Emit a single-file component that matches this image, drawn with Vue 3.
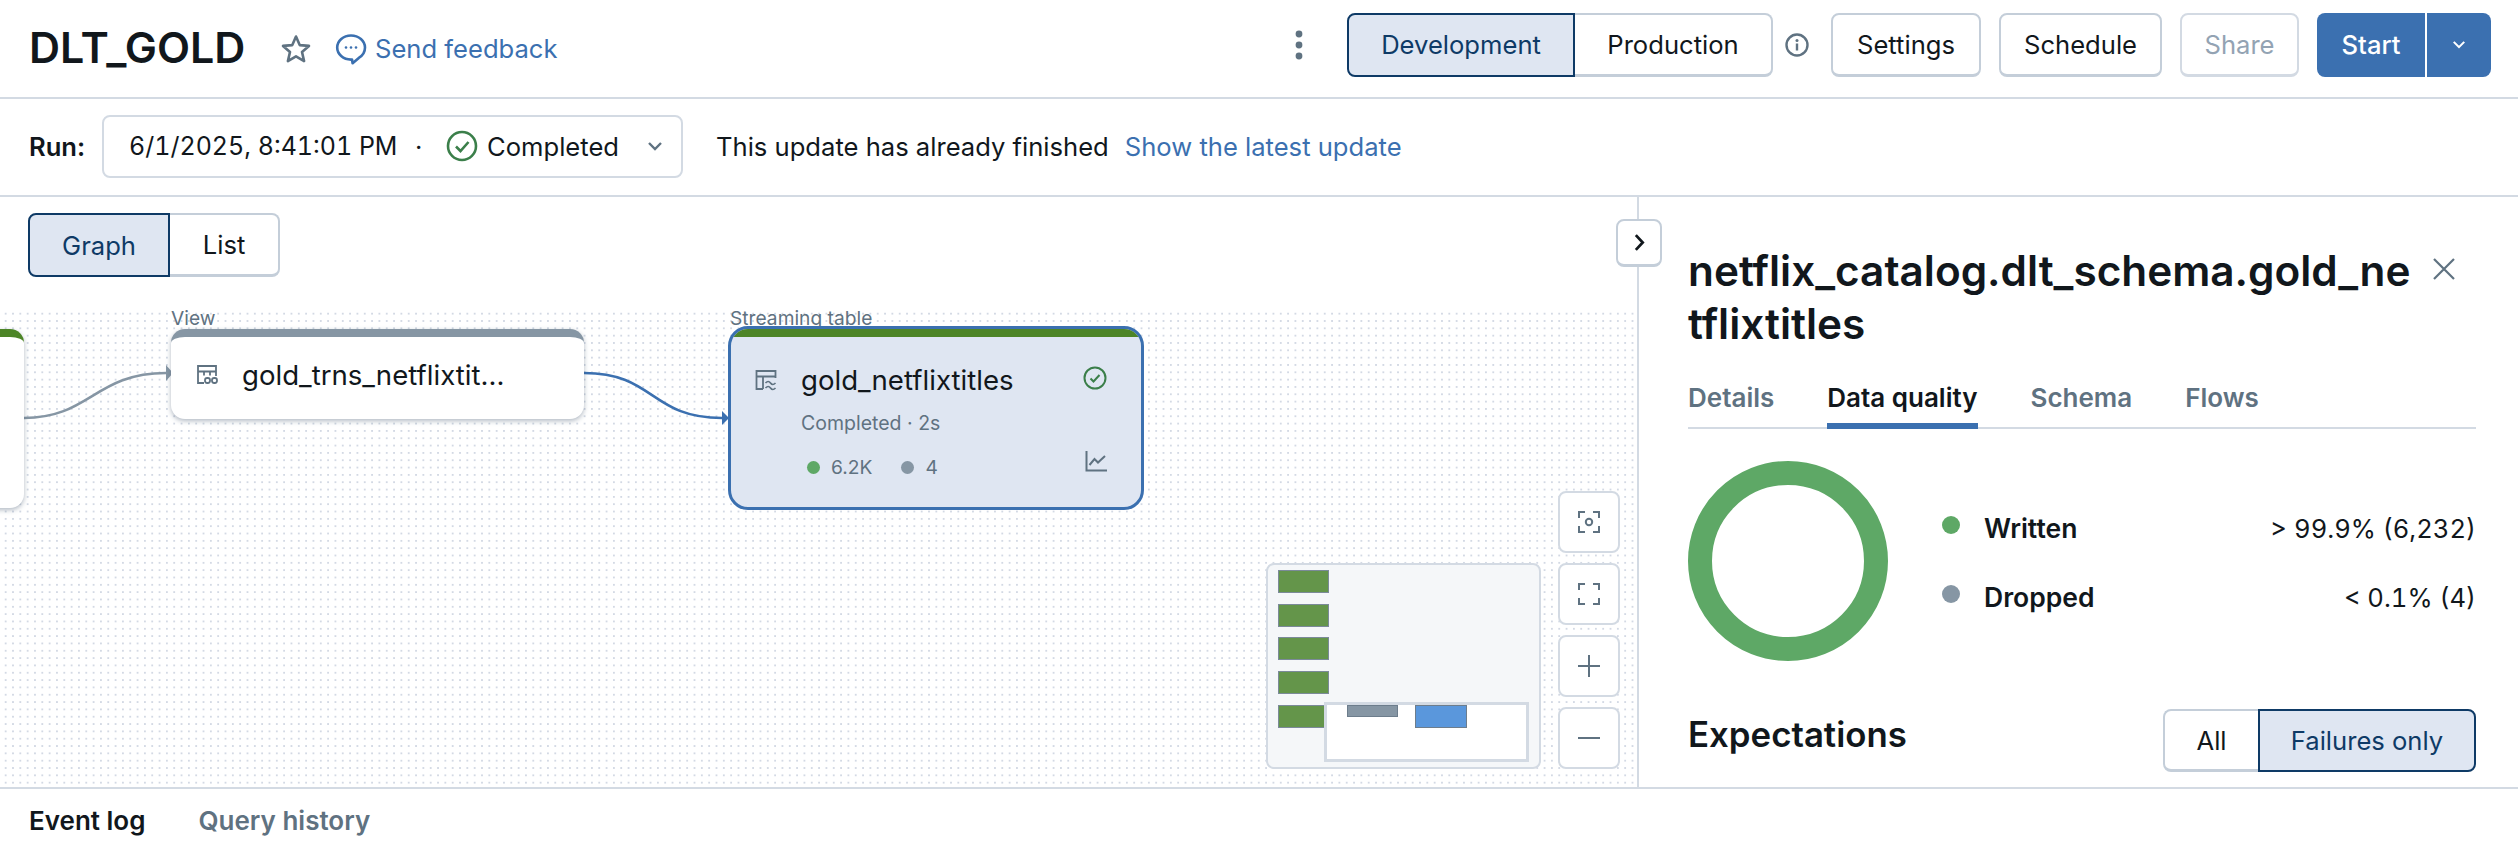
<template>
  <div class="page">
    <header class="topbar">
      <h1 class="title">DLT_GOLD</h1>
      <svg class="star" viewBox="0 0 32 32" fill="none" aria-hidden="true">
        <path d="M16 3.5l3.7 8.6 9.3.8-7 6.1 2.1 9.1-8.1-4.8-8.1 4.8 2.1-9.1-7-6.1 9.3-.8z" stroke="#5f7281" stroke-width="2.6" stroke-linejoin="round" />
      </svg>
      <a class="feedback">
        <svg class="feedback-icon" viewBox="0 0 32 32" fill="none" aria-hidden="true">
          <path d="M16 2.5C8.3 2.5 2.2 7.900 2.200 14.600c0 6.600 6 12 13.800 12 .4 0 .7 0 1-.1l.6 3.800 6.200-5.400c3.900-2.200 6.200-6 6.200-10.300 0-6.700-6.200-12.100-14-12.100z" stroke="#3b70b0" stroke-width="2.600" stroke-linejoin="round" />
          <circle cx="11" cy="14.500" r="1.300" fill="#3b70b0" />
          <circle cx="16" cy="14.500" r="1.300" fill="#3b70b0" />
          <circle cx="21" cy="14.500" r="1.300" fill="#3b70b0" />
        </svg>
        Send feedback
      </a>
      <div class="top-actions">
        <svg class="kebab" viewBox="0 0 8 30" aria-hidden="true">
          <circle cx="4" cy="4" r="3.400" fill="#5f7281" />
          <circle cx="4" cy="15" r="3.400" fill="#5f7281" />
          <circle cx="4" cy="26" r="3.400" fill="#5f7281" />
        </svg>
        <div class="seg seg-mode">
          <button class="seg-btn active dev">Development</button>
          <button class="seg-btn prod">Production</button>
        </div>
        <svg class="info" viewBox="0 0 24 24" fill="none" aria-hidden="true">
          <circle cx="12" cy="12" r="10.500" stroke="#5f7281" stroke-width="2.400" />
          <circle cx="12" cy="7.500" r="1.500" fill="#5f7281" />
          <rect x="10.800" y="10.500" width="2.400" height="7" fill="#5f7281" />
        </svg>
        <button class="btn settings">Settings</button>
        <button class="btn schedule">Schedule</button>
        <button class="btn share" disabled>Share</button>
        <div class="start">
          <span class="start-label">Start</span>
          <span class="start-caret">
            <svg viewBox="0 0 16 10" width="14" height="9" fill="none" aria-hidden="true">
              <path d="M2 2l6 6 6-6" stroke="#fff" stroke-width="2.400" />
            </svg>
          </span>
        </div>
      </div>
    </header>

    <div class="runbar">
      <span class="run-label">Run:</span>
      <div class="run-select">
        <span class="run-date">6/1/2025, 8:41:01 PM</span>
        <span class="run-dot">·</span>
        <svg class="run-check" viewBox="0 0 32 32" fill="none" aria-hidden="true">
          <circle cx="16" cy="16" r="14" stroke="#3b7f4a" stroke-width="2.600" />
          <path d="M10 16.500l4.500 4.500 8-9" stroke="#3b7f4a" stroke-width="2.600" />
        </svg>
        <span class="run-status">Completed</span>
        <svg class="run-caret" viewBox="0 0 16 10" fill="none" aria-hidden="true">
          <path d="M2 2l6 6 6-6" stroke="#5f7281" stroke-width="2.400" />
        </svg>
      </div>
      <span class="run-msg">This update has already finished</span>
      <a class="run-link">Show the latest update</a>
    </div>

    <main class="main">
      <section class="left">
        <div class="graph-tools">
          <div class="seg seg-view">
            <button class="seg-btn active graph-btn">Graph</button>
            <button class="seg-btn list-btn">List</button>
          </div>
        </div>

        <div class="canvas">
          <svg class="edges" width="1637" height="478" fill="none" aria-hidden="true">
            <path d="M24 110C90 110 95 65 166 65" stroke="#8696a4" stroke-width="2.500" />
            <path d="M166 57l7 8-7 8z" fill="#8696a4" />
            <path d="M584 65C655 65 650 110 722 110" stroke="#3b70b0" stroke-width="2.500" />
            <path d="M722 103l7 7-7 7z" fill="#3b70b0" />
          </svg>

          <div class="node node-left"></div>

          <span class="node-type type-view">View</span>
          <div class="node node-view">
            <svg class="node-icon" viewBox="0 0 22 22" fill="none" aria-hidden="true">
              <path d="M8 19H2V2h18v10M2 7.500h18M8 7.500v4M14 7.500v4" stroke="#5f7281" stroke-width="1.800" />
              <rect x="9" y="14" width="5" height="5" rx="2.200" stroke="#5f7281" stroke-width="1.800" />
              <rect x="16" y="14" width="5" height="5" rx="2.200" stroke="#5f7281" stroke-width="1.800" />
            </svg>
            <span class="node-name">gold_trns_netflixtit...</span>
          </div>

          <span class="node-type type-stream">Streaming table</span>
          <div class="node node-stream">
            <div class="stream-head">
              <svg class="node-icon" viewBox="0 0 22 22" fill="none" aria-hidden="true">
                <path d="M8 20H1.500V2h19v7M1.500 7.500h19M8 7.500V20" stroke="#5f7281" stroke-width="1.800" />
                <path d="M10.500 14c2-2 3.500-2 5 0s3 2 5 0M10.500 19c2-2 3.500-2 5 0s3 2 5 0" stroke="#5f7281" stroke-width="1.700" />
              </svg>
              <span class="node-name">gold_netflixtitles</span>
              <svg class="stream-check" viewBox="0 0 24 24" fill="none" aria-hidden="true">
                <circle cx="12" cy="12" r="10.500" stroke="#3b7f4a" stroke-width="2" />
                <path d="M7.500 12.500l3 3 6-6.500" stroke="#3b7f4a" stroke-width="2" />
              </svg>
            </div>
            <div class="stream-sub">Completed · 2s</div>
            <div class="stream-stats">
              <i class="dot green"></i><span class="stat-a">6.2K</span>
              <i class="dot grey"></i><span>4</span>
              <svg class="stream-chart" viewBox="0 0 22 22" fill="none" aria-hidden="true">
                <path d="M1.500 1v19.500H22" stroke="#5f7281" stroke-width="2" />
                <path d="M4.500 15l5-6 3.500 3.500L20 6" stroke="#5f7281" stroke-width="2" />
              </svg>
            </div>
          </div>

          <div class="minimap">
            <i v-for="top in miniBars" :key="top" class="mini-bar" :style="{ top: top + 'px' }"></i>
            <div class="mini-view"></div>
            <i class="mini-grey"></i>
            <i class="mini-blue"></i>
          </div>

          <div class="controls">
            <button class="ctl">
              <svg viewBox="0 0 22 22" fill="none" aria-hidden="true">
                <path d="M1 7V1h6M15 1h6v6M21 15v6h-6M7 21H1v-6" stroke="#5f7281" stroke-width="2" />
                <circle cx="11" cy="11" r="3.200" stroke="#5f7281" stroke-width="2" />
              </svg>
            </button>
            <button class="ctl">
              <svg viewBox="0 0 22 22" fill="none" aria-hidden="true">
                <path d="M1 7V1h6M15 1h6v6M21 15v6h-6M7 21H1v-6" stroke="#5f7281" stroke-width="2" />
              </svg>
            </button>
            <button class="ctl">
              <svg viewBox="0 0 22 22" fill="none" aria-hidden="true">
                <path d="M0 11h22M11 0v22" stroke="#5f7281" stroke-width="2" />
              </svg>
            </button>
            <button class="ctl">
              <svg viewBox="0 0 22 22" fill="none" aria-hidden="true">
                <path d="M0 11h22" stroke="#5f7281" stroke-width="2" />
              </svg>
            </button>
          </div>
        </div>

        <button class="collapse">
          <svg viewBox="0 0 12 20" width="11" height="19" fill="none" aria-hidden="true">
            <path d="M2 2l7.500 8L2 18" stroke="#11171c" stroke-width="3" />
          </svg>
        </button>
      </section>

      <aside class="panel">
        <div class="panel-head">
          <h2 class="panel-title">netflix_catalog.dlt_schema.gold_netflixtitles</h2>
          <svg class="close" viewBox="0 0 24 24" fill="none" aria-hidden="true">
            <path d="M2 2l20 20M22 2L2 22" stroke="#5f7281" stroke-width="2.200" />
          </svg>
        </div>

        <nav class="tabs">
          <span v-for="tab in tabs" :key="tab" class="tab" :class="{ on: tab === 'Data quality' }">{{ tab }}</span>
        </nav>

        <div class="quality">
          <div class="donut"></div>
          <div class="legend">
            <div class="legend-row">
              <i class="legend-dot green"></i>
              <span class="legend-name">Written</span>
              <span class="legend-val">&gt; 99.9% (6,232)</span>
            </div>
            <div class="legend-row">
              <i class="legend-dot grey"></i>
              <span class="legend-name">Dropped</span>
              <span class="legend-val">&lt; 0.1% (4)</span>
            </div>
          </div>
        </div>

        <div class="expect">
          <h3 class="expect-title">Expectations</h3>
          <div class="seg seg-expect">
            <button class="seg-btn all-btn">All</button>
            <button class="seg-btn active fail-btn">Failures only</button>
          </div>
        </div>
      </aside>
    </main>

    <footer class="bottom">
      <span class="bottom-tab on">Event log</span>
      <span class="bottom-tab">Query history</span>
    </footer>
  </div>
</template>

<script setup>
const tabs = ['Details', 'Data quality', 'Schema', 'Flows']
const miniBars = [5, 39, 72, 106, 140]
</script>

<style>
html, body { margin: 0; background: #fff; }
</style>

<style scoped>
.page {
  width: 2518px;
  height: 842px;
  display: flex;
  flex-direction: column;
  overflow: hidden;
  font-family: Inter, "Liberation Sans", sans-serif;
  color: #11171c;
  font-size: 25.6px;
  background: #fff;
}

button {
  font-family: inherit;
  font-size: 25.6px;
  color: #11171c;
  background: #fff;
  padding: 0;
  cursor: pointer;
}

/* top bar */
.topbar {
  height: 99px;
  flex-shrink: 0;
  box-sizing: border-box;
  border-bottom: 2px solid #d3dae3;
  display: flex;
  align-items: center;
  padding: 0 27px 0 29px;
}
.title {
  margin: 0;
  font-size: 43px;
  font-weight: 600;
  width: 217px;
  position: relative;
  top: -2px;
  white-space: nowrap;
}
.star { width: 32px; height: 32px; margin-left: 34px; }
.feedback {
  display: flex;
  align-items: center;
  gap: 8px;
  margin-left: 23px;
  color: #3b70b0;
  white-space: nowrap;
}
.feedback-icon { width: 32px; height: 32px; }

.top-actions { margin-left: auto; margin-bottom: 8px; display: flex; align-items: center; }
.kebab { width: 8px; height: 30px; margin-right: 44px; }
.info { width: 24px; height: 24px; margin: 0 22px 0 12px; }

.seg { display: flex; height: 64px; }
.seg-btn {
  box-sizing: border-box;
  height: 100%;
  border: 2px solid #c4ced9;
  border-bottom-width: 3px;
  white-space: nowrap;
}
.seg-btn:first-child { border-radius: 8px 0 0 8px; }
.seg-btn:last-child { border-radius: 0 8px 8px 0; }
.seg-btn.active {
  background: #dfe6f2;
  border: 2px solid #0e3a66;
  color: #0e3a66;
}
.dev { width: 228px; }
.prod { width: 198px; border-left: 0; }

.btn {
  box-sizing: border-box;
  height: 64px;
  border: 2px solid #c4ced9;
  border-bottom-width: 3px;
  border-radius: 8px;
  margin-right: 18px;
}
.settings { width: 150px; }
.schedule { width: 163px; }
.share { width: 119px; color: #93a3b3; border-color: #d3dae3; }

.start {
  width: 174px;
  height: 64px;
  display: flex;
  background: #3b70b0;
  color: #fff;
  border-radius: 8px;
  font-weight: 500;
}
.start-label {
  width: 110px;
  display: flex;
  align-items: center;
  justify-content: center;
  border-right: 2px solid #fff;
  box-sizing: border-box;
}
.start-caret { flex: 1; display: flex; align-items: center; justify-content: center; }

/* run bar */
.runbar {
  height: 98px;
  flex-shrink: 0;
  box-sizing: border-box;
  border-bottom: 2px solid #d3dae3;
  display: flex;
  align-items: center;
  padding: 0 0 2px 29px;
}
.run-label { font-weight: 600; width: 73px; }
.run-select {
  box-sizing: border-box;
  width: 581px;
  height: 63px;
  border: 2px solid #d3dae3;
  border-radius: 8px;
  display: flex;
  align-items: center;
  padding-left: 25px;
  white-space: nowrap;
}
.run-date { width: 269px; font-size: 25px; font-variant-numeric: tabular-nums; }
.run-dot { width: 31px; padding-left: 17px; }
.run-check { width: 32px; height: 32px; margin-right: 9px; }
.run-status { width: 132px; }
.run-caret { width: 16px; height: 10px; margin-left: 28px; }
.run-msg { margin-left: 33px; white-space: nowrap; }
.run-link { margin-left: 16px; color: #3b70b0; white-space: nowrap; }

/* main */
.main { flex: 1; min-height: 0; display: flex; }
.left {
  width: 1639px;
  flex-shrink: 0;
  box-sizing: border-box;
  border-right: 2px solid #d3dae3;
  position: relative;
  display: flex;
  flex-direction: column;
}
.graph-tools { height: 111px; box-sizing: border-box; padding: 16px 0 0 28px; }
.seg-view { width: 252px; }
.graph-btn { width: 142px; }
.list-btn { width: 110px; border-left: 0; }

.canvas {
  flex: 1;
  position: relative;
  background-image: radial-gradient(circle, #d3d9e4 1px, transparent 1.3px);
  background-size: 7.330px 7.330px;
  background-position: 2px 2px;
}
.edges { position: absolute; left: 0; top: 0; }

.node {
  position: absolute;
  box-sizing: border-box;
  background: #fff;
  border-radius: 14px;
  overflow: hidden;
  box-shadow: 0 2px 5px rgba(60, 80, 105, 0.4);
}
.node-left {
  left: -40px;
  top: 21px;
  width: 64px;
  height: 179px;
  border-top: 8px solid #4d8527;
}
.node-type {
  position: absolute;
  top: -1px;
  font-size: 19.200px;
  line-height: 22px;
  color: #5f7281;
  white-space: nowrap;
}
.type-view { left: 171px; }
.type-stream { left: 730px; }
.node-view {
  left: 171px;
  top: 21px;
  width: 413px;
  height: 90px;
  border-top: 8px solid #8696a4;
  display: flex;
  align-items: center;
  padding: 0 0 6px 25px;
}
.node-icon { width: 22px; height: 22px; flex-shrink: 0; }
.node-name { font-size: 27.600px; margin-left: 24px; white-space: nowrap; }

.node-stream {
  left: 728px;
  top: 18px;
  width: 416px;
  height: 184px;
  background: #dfe6f2;
  border: 3px solid #3b70b0;
  border-radius: 20px;
  padding-left: 24px;
  box-shadow: none;
}
.node-stream::before {
  content: "";
  display: block;
  height: 8px;
  margin-left: -24px;
  background: #4d8527;
}
.stream-head { display: flex; align-items: center; height: 26px; margin-top: 30px; position: relative; }
.stream-head .node-name { margin-left: 24px; }
.stream-check { width: 24px; height: 24px; position: absolute; left: 328px; top: -1px; }
.stream-sub { margin: 18px 0 0 46px; font-size: 19.500px; line-height: 24px; color: #5f7281; }
.stream-stats {
  position: relative;
  display: flex;
  align-items: center;
  margin: 20px 0 0 52px;
  font-size: 19.200px;
  line-height: 24px;
  color: #5f7281;
}
.dot { width: 13px; height: 13px; border-radius: 50%; margin-right: 11px; }
.green { background: #5ea866; }
.grey { background: #8696a4; }
.stat-a { margin-right: 29px; }
.stream-chart { position: absolute; left: 278px; top: -5px; width: 22px; height: 22px; }

.minimap {
  position: absolute;
  left: 1266px;
  top: 255px;
  box-sizing: border-box;
  width: 275px;
  height: 206px;
  background: #f5f7f9;
  border: 2px solid #d3dae3;
  border-radius: 8px;
}
.mini-bar {
  position: absolute;
  left: 10px;
  width: 51px;
  height: 23px;
  box-sizing: border-box;
  background: #64954a;
  border: 1px solid #7b8a99;
}
.mini-view {
  position: absolute;
  left: 56px;
  top: 137px;
  box-sizing: border-box;
  width: 205px;
  height: 60px;
  background: #fff;
  border: 3px solid #d3dae3;
}
.mini-grey,
.mini-blue {
  position: absolute;
  top: 140px;
  box-sizing: border-box;
  border: 1px solid #6d7d8c;
}
.mini-grey { left: 79px; width: 51px; height: 12px; background: #8696a4; }
.mini-blue { left: 147px; width: 52px; height: 23px; background: #5a97dc; }

.controls {
  position: absolute;
  left: 1558px;
  top: 183px;
  display: flex;
  flex-direction: column;
  gap: 10px;
}
.ctl {
  box-sizing: border-box;
  width: 62px;
  height: 62px;
  border: 2px solid #d3dae3;
  border-radius: 8px;
  display: flex;
  align-items: center;
  justify-content: center;
}
.ctl svg { width: 22px; height: 22px; }

.collapse {
  position: absolute;
  left: 1616px;
  top: 22px;
  box-sizing: border-box;
  width: 46px;
  height: 48px;
  border: 2px solid #c4ced9;
  border-bottom-width: 3px;
  border-radius: 8px;
  display: flex;
  align-items: center;
  justify-content: center;
  z-index: 2;
}

/* right panel */
.panel { flex: 1; box-sizing: border-box; padding: 47px 42px 0 49px; overflow: hidden; }
.panel-head { display: flex; align-items: flex-start; }
.panel-title {
  margin: 0;
  width: 727px;
  font-size: 42.300px;
  font-weight: 600;
  line-height: 53px;
  word-break: break-all;
}
.close { width: 24px; height: 24px; margin: 13px 0 0 17px; flex-shrink: 0; }

.tabs {
  display: flex;
  gap: 53px;
  height: 56px;
  margin-top: 23px;
  box-sizing: border-box;
  border-bottom: 2px solid #d3dae3;
}
.tab { font-size: 26px; font-weight: 600; color: #5f7281; height: 56px; box-sizing: border-box; line-height: 50px; white-space: nowrap; }
.tab.on { color: #11171c; border-bottom: 6px solid #3b70b0; }

.quality { display: flex; align-items: flex-start; margin-top: 32px; }
.donut {
  box-sizing: border-box;
  width: 200px;
  height: 200px;
  flex-shrink: 0;
  border-radius: 50%;
  border: 24px solid #5ea866;
}
.legend { flex: 1; margin: 49px 0 0 54px; display: flex; flex-direction: column; gap: 33px; }
.legend-row { display: flex; align-items: center; height: 36px; }
.legend-dot { width: 18px; height: 18px; border-radius: 50%; margin: -6px 24px 0 0; }
.legend-name { font-weight: 600; font-size: 26.500px; }
.legend-val { margin-left: auto; font-variant-numeric: tabular-nums; }

.expect { display: flex; align-items: center; justify-content: space-between; margin-top: 48px; }
.expect-title { margin: 0; font-size: 34.800px; font-weight: 600; position: relative; top: -7px; }
.seg-expect { height: 63px; }
.all-btn { width: 95px; border-right: 0; }
.fail-btn { width: 218px; }

/* bottom */
.bottom {
  height: 55px;
  flex-shrink: 0;
  box-sizing: border-box;
  border-top: 2px solid #d3dae3;
  display: flex;
  gap: 53px;
  align-items: center;
  padding: 9px 0 0 29px;
}
.bottom-tab { font-weight: 600; font-size: 26px; color: #5f7281; white-space: nowrap; }
.bottom-tab.on { color: #11171c; }
</style>
